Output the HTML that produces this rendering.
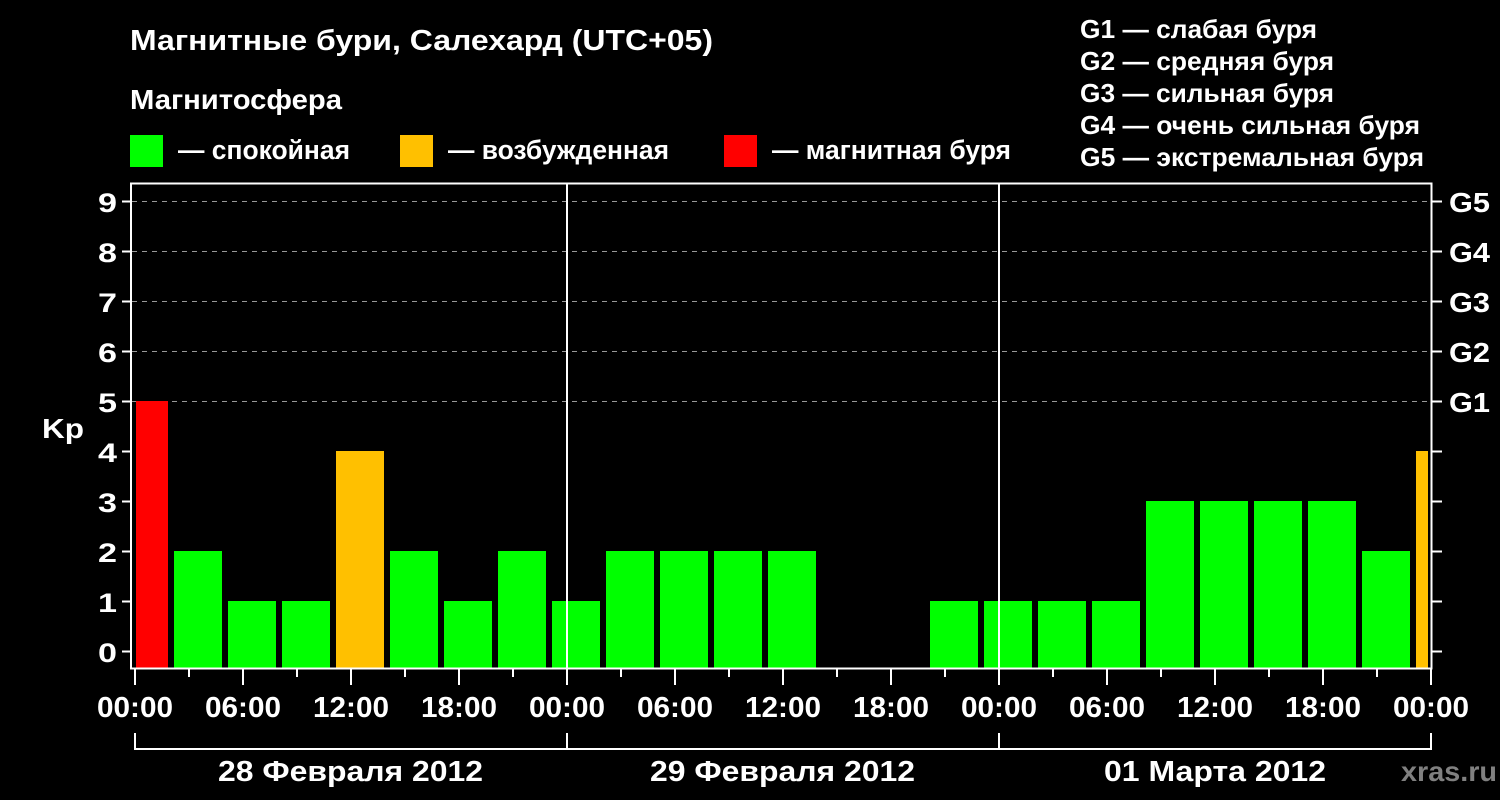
<!DOCTYPE html>
<html><head><meta charset="utf-8"><style>
html,body{margin:0;padding:0;background:#000;}
svg{display:block;}
text{font-family:"Liberation Sans",Arial,sans-serif;font-weight:bold;fill:#fff;}
</style></head><body>
<svg width="1500" height="800" viewBox="0 0 1500 800" xmlns="http://www.w3.org/2000/svg">
<rect width="1500" height="800" fill="#000"/>
<text x="130" y="50" font-size="29" textLength="583" lengthAdjust="spacingAndGlyphs">Магнитные бури, Салехард (UTC+05)</text>
<text x="130" y="109" font-size="28" textLength="212" lengthAdjust="spacingAndGlyphs">Магнитосфера</text>
<rect x="130" y="135" width="33" height="32" fill="#00ff00"/>
<text x="178" y="159" font-size="27" textLength="172" lengthAdjust="spacingAndGlyphs">— спокойная</text>
<rect x="400" y="135" width="33" height="32" fill="#ffc000"/>
<text x="448" y="159" font-size="27" textLength="221" lengthAdjust="spacingAndGlyphs">— возбужденная</text>
<rect x="724" y="135" width="33" height="32" fill="#ff0000"/>
<text x="772" y="159" font-size="27" textLength="239" lengthAdjust="spacingAndGlyphs">— магнитная буря</text>
<g font-size="26">
<text x="1080" y="38" textLength="237" lengthAdjust="spacingAndGlyphs">G1 — слабая буря</text>
<text x="1080" y="70" textLength="254" lengthAdjust="spacingAndGlyphs">G2 — средняя буря</text>
<text x="1080" y="102" textLength="254" lengthAdjust="spacingAndGlyphs">G3 — сильная буря</text>
<text x="1080" y="134" textLength="340" lengthAdjust="spacingAndGlyphs">G4 — очень сильная буря</text>
<text x="1080" y="166" textLength="344" lengthAdjust="spacingAndGlyphs">G5 — экстремальная буря</text>
</g>
<g stroke="#999" stroke-width="1" stroke-dasharray="5,5">
<line x1="132" y1="201.5" x2="1431" y2="201.5"/>
<line x1="132" y1="251.5" x2="1431" y2="251.5"/>
<line x1="132" y1="301.5" x2="1431" y2="301.5"/>
<line x1="132" y1="351.5" x2="1431" y2="351.5"/>
<line x1="132" y1="401.5" x2="1431" y2="401.5"/>
</g>
<g>
<rect x="136" y="401" width="32" height="267" fill="#ff0000"/>
<rect x="174" y="551" width="48" height="117" fill="#00ff00"/>
<rect x="228" y="601" width="48" height="67" fill="#00ff00"/>
<rect x="282" y="601" width="48" height="67" fill="#00ff00"/>
<rect x="336" y="451" width="48" height="217" fill="#ffc000"/>
<rect x="390" y="551" width="48" height="117" fill="#00ff00"/>
<rect x="444" y="601" width="48" height="67" fill="#00ff00"/>
<rect x="498" y="551" width="48" height="117" fill="#00ff00"/>
<rect x="552" y="601" width="48" height="67" fill="#00ff00"/>
<rect x="606" y="551" width="48" height="117" fill="#00ff00"/>
<rect x="660" y="551" width="48" height="117" fill="#00ff00"/>
<rect x="714" y="551" width="48" height="117" fill="#00ff00"/>
<rect x="768" y="551" width="48" height="117" fill="#00ff00"/>
<rect x="930" y="601" width="48" height="67" fill="#00ff00"/>
<rect x="984" y="601" width="48" height="67" fill="#00ff00"/>
<rect x="1038" y="601" width="48" height="67" fill="#00ff00"/>
<rect x="1092" y="601" width="48" height="67" fill="#00ff00"/>
<rect x="1146" y="501" width="48" height="167" fill="#00ff00"/>
<rect x="1200" y="501" width="48" height="167" fill="#00ff00"/>
<rect x="1254" y="501" width="48" height="167" fill="#00ff00"/>
<rect x="1308" y="501" width="48" height="167" fill="#00ff00"/>
<rect x="1362" y="551" width="48" height="117" fill="#00ff00"/>
<rect x="1416" y="451" width="12" height="217" fill="#ffc000"/>
</g>
<g stroke="#fff" stroke-width="2" fill="none">
<polyline points="131,668 131,183.5 1431.5,183.5 1431.5,668"/>
<line x1="130" y1="668.5" x2="1432.5" y2="668.5"/>
<line x1="567" y1="183" x2="567" y2="668"/>
<line x1="999" y1="183" x2="999" y2="668"/>
<line x1="122" y1="201.5" x2="131" y2="201.5"/><line x1="122" y1="251.5" x2="131" y2="251.5"/>
<line x1="122" y1="301.5" x2="131" y2="301.5"/><line x1="122" y1="351.5" x2="131" y2="351.5"/>
<line x1="122" y1="401.5" x2="131" y2="401.5"/><line x1="122" y1="451.5" x2="131" y2="451.5"/>
<line x1="122" y1="501.5" x2="131" y2="501.5"/><line x1="122" y1="551.5" x2="131" y2="551.5"/>
<line x1="122" y1="601.5" x2="131" y2="601.5"/><line x1="122" y1="651.5" x2="131" y2="651.5"/>
<line x1="1432" y1="201.5" x2="1442" y2="201.5"/><line x1="1432" y1="251.5" x2="1442" y2="251.5"/>
<line x1="1432" y1="301.5" x2="1442" y2="301.5"/><line x1="1432" y1="351.5" x2="1442" y2="351.5"/>
<line x1="1432" y1="401.5" x2="1442" y2="401.5"/><line x1="1432" y1="451.5" x2="1442" y2="451.5"/>
<line x1="1432" y1="501.5" x2="1442" y2="501.5"/><line x1="1432" y1="551.5" x2="1442" y2="551.5"/>
<line x1="1432" y1="601.5" x2="1442" y2="601.5"/><line x1="1432" y1="651.5" x2="1442" y2="651.5"/>
<line x1="135" y1="669" x2="135" y2="685"/><line x1="189" y1="669" x2="189" y2="677"/>
<line x1="243" y1="669" x2="243" y2="685"/><line x1="297" y1="669" x2="297" y2="677"/>
<line x1="351" y1="669" x2="351" y2="685"/><line x1="405" y1="669" x2="405" y2="677"/>
<line x1="459" y1="669" x2="459" y2="685"/><line x1="513" y1="669" x2="513" y2="677"/>
<line x1="567" y1="669" x2="567" y2="685"/><line x1="621" y1="669" x2="621" y2="677"/>
<line x1="675" y1="669" x2="675" y2="685"/><line x1="729" y1="669" x2="729" y2="677"/>
<line x1="783" y1="669" x2="783" y2="685"/><line x1="837" y1="669" x2="837" y2="677"/>
<line x1="891" y1="669" x2="891" y2="685"/><line x1="945" y1="669" x2="945" y2="677"/>
<line x1="999" y1="669" x2="999" y2="685"/><line x1="1053" y1="669" x2="1053" y2="677"/>
<line x1="1107" y1="669" x2="1107" y2="685"/><line x1="1161" y1="669" x2="1161" y2="677"/>
<line x1="1215" y1="669" x2="1215" y2="685"/><line x1="1269" y1="669" x2="1269" y2="677"/>
<line x1="1323" y1="669" x2="1323" y2="685"/><line x1="1377" y1="669" x2="1377" y2="677"/>
<line x1="1431" y1="669" x2="1431" y2="685"/>
<polyline points="135,733 135,749 1431,749 1431,733"/>
<line x1="567" y1="733" x2="567" y2="749"/>
<line x1="999" y1="733" x2="999" y2="749"/>
</g>
<g font-size="27">
<text x="98" y="212" textLength="19" lengthAdjust="spacingAndGlyphs">9</text>
<text x="98" y="262" textLength="19" lengthAdjust="spacingAndGlyphs">8</text>
<text x="98" y="312" textLength="19" lengthAdjust="spacingAndGlyphs">7</text>
<text x="98" y="362" textLength="19" lengthAdjust="spacingAndGlyphs">6</text>
<text x="98" y="412" textLength="19" lengthAdjust="spacingAndGlyphs">5</text>
<text x="98" y="462" textLength="19" lengthAdjust="spacingAndGlyphs">4</text>
<text x="98" y="512" textLength="19" lengthAdjust="spacingAndGlyphs">3</text>
<text x="98" y="562" textLength="19" lengthAdjust="spacingAndGlyphs">2</text>
<text x="98" y="612" textLength="19" lengthAdjust="spacingAndGlyphs">1</text>
<text x="98" y="662" textLength="19" lengthAdjust="spacingAndGlyphs">0</text>
</g>
<text x="42" y="438" font-size="28" textLength="42" lengthAdjust="spacingAndGlyphs">Kp</text>
<g font-size="28">
<text x="1449" y="212" textLength="41" lengthAdjust="spacingAndGlyphs">G5</text>
<text x="1449" y="262" textLength="41" lengthAdjust="spacingAndGlyphs">G4</text>
<text x="1449" y="312" textLength="41" lengthAdjust="spacingAndGlyphs">G3</text>
<text x="1449" y="362" textLength="41" lengthAdjust="spacingAndGlyphs">G2</text>
<text x="1449" y="412" textLength="41" lengthAdjust="spacingAndGlyphs">G1</text>
</g>
<g font-size="29">
<text x="97" y="717" textLength="76" lengthAdjust="spacingAndGlyphs">00:00</text>
<text x="205" y="717" textLength="76" lengthAdjust="spacingAndGlyphs">06:00</text>
<text x="313" y="717" textLength="76" lengthAdjust="spacingAndGlyphs">12:00</text>
<text x="421" y="717" textLength="76" lengthAdjust="spacingAndGlyphs">18:00</text>
<text x="529" y="717" textLength="76" lengthAdjust="spacingAndGlyphs">00:00</text>
<text x="637" y="717" textLength="76" lengthAdjust="spacingAndGlyphs">06:00</text>
<text x="745" y="717" textLength="76" lengthAdjust="spacingAndGlyphs">12:00</text>
<text x="853" y="717" textLength="76" lengthAdjust="spacingAndGlyphs">18:00</text>
<text x="961" y="717" textLength="76" lengthAdjust="spacingAndGlyphs">00:00</text>
<text x="1069" y="717" textLength="76" lengthAdjust="spacingAndGlyphs">06:00</text>
<text x="1177" y="717" textLength="76" lengthAdjust="spacingAndGlyphs">12:00</text>
<text x="1285" y="717" textLength="76" lengthAdjust="spacingAndGlyphs">18:00</text>
<text x="1393" y="717" textLength="76" lengthAdjust="spacingAndGlyphs">00:00</text>
<text x="218" y="781" textLength="265" lengthAdjust="spacingAndGlyphs">28 Февраля 2012</text>
<text x="650" y="781" textLength="265" lengthAdjust="spacingAndGlyphs">29 Февраля 2012</text>
<text x="1104" y="781" textLength="222" lengthAdjust="spacingAndGlyphs">01 Марта 2012</text>
</g>
<text x="1401" y="781" font-size="28" textLength="96" lengthAdjust="spacingAndGlyphs" style="fill:#808080">xras.ru</text>
</svg>
</body></html>
